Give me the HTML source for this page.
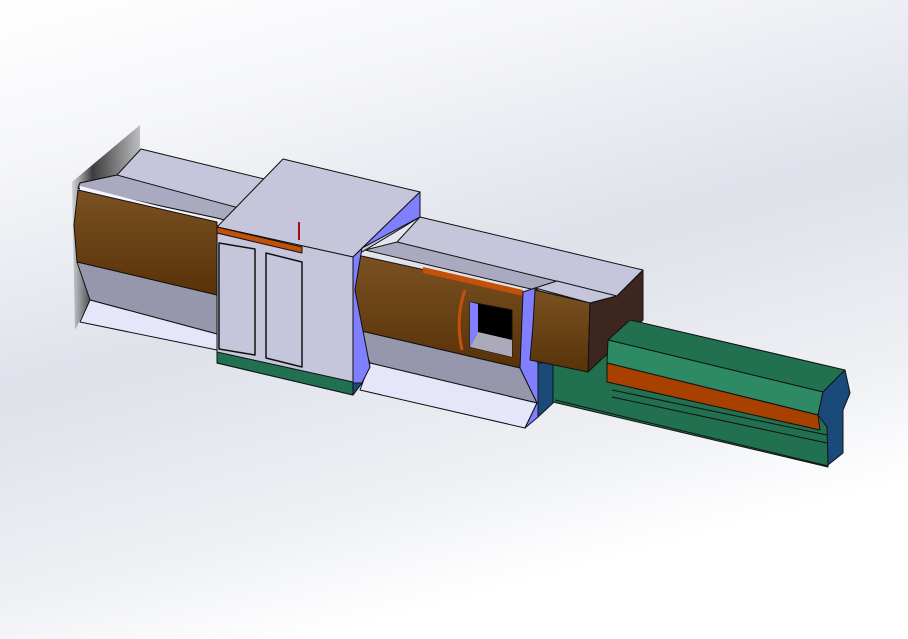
<!DOCTYPE html>
<html><head><meta charset="utf-8"><style>
html,body{margin:0;padding:0;}
body{width:908px;height:639px;overflow:hidden;background:linear-gradient(165deg,#ffffff 0%,#f4f5f8 20%,#dfe1ea 45%,#eef0f4 68%,#ffffff 82%);}
svg{position:absolute;left:0;top:0;}
</style></head><body>
<svg width="908" height="639" viewBox="0 0 908 639">
<defs>
<linearGradient id="br" x1="0" y1="0" x2="0" y2="1"><stop offset="0" stop-color="#7a5122"/><stop offset="1" stop-color="#583308"/></linearGradient>
<linearGradient id="sh" x1="0" y1="0" x2="1" y2="0"><stop offset="0" stop-color="#555" stop-opacity="0.2"/><stop offset="0.3" stop-color="#3c3c3c"/><stop offset="1" stop-color="#3c3c3c" stop-opacity="0.3"/></linearGradient>
</defs>
<g stroke="#111" stroke-width="1" stroke-linejoin="round">
<polygon points="72,182 140,125 140,175 90,300 75,330" fill="url(#sh)" stroke="none"/>
<polygon points="80,183 117,175 141,149 420,217 357,255 217,218 78,188" fill="#c5c5dc"/>
<polygon points="80,183 117,175 357,240 357,255 217,218 78,188" fill="#a9a9bf"/>
<polygon points="80,186 217,221 217,225 80,190" fill="#f4f4ff" stroke="none"/>
<polygon points="78,190 217,222 217,295 77,262 74,225" fill="url(#br)"/>
<polygon points="77,262 217,295 217,334 90,300" fill="#9696ad"/>
<polygon points="90,300 217,334 217,350 80,322" fill="#e6e6fa"/>
<polygon points="397,242 420,217 643,270 617,296 590,303 535,290" fill="#c5c5dc"/>
<polygon points="365,250 397,242 560,282 535,290" fill="#a9a9bf"/>
<polygon points="357,255 525,292 520,368 357,330 354,290" fill="url(#br)"/>
<polygon points="423,267 523,290 523,296 423,273" fill="#c5500a" stroke="none"/>
<polygon points="357,330 520,368 537,403 370,363" fill="#9696ad"/>
<polygon points="370,363 537,403 525,428 360,390" fill="#e6e6fa"/>
<polygon points="470,302 512,310 512,357 470,347" fill="#000"/>
<polygon points="478,332 512,340 512,357 470,347" fill="#aaaabb" stroke="none"/>
<polygon points="470,302 478,304 478,332 470,347" fill="#7f7fff" stroke="none"/>
<path d="M465,290 Q455,318 462,350" fill="none" stroke="#c5500a" stroke-width="3"/>
<polygon points="523,292 535,288 537,360 548,403 538,417 525,428 537,403 520,368" fill="#7f7fff"/>
<polygon points="538,363 553,363 553,403 538,417" fill="#1a4a7a"/>
<!-- green rail -->
<polygon points="553,360 610,355 822,410 828,427 828,467 553,402" fill="#217050"/>
<polygon points="535,288 557,281 617,296 590,303" fill="#c5c5dc"/>
<polygon points="535,290 590,303 588,372 530,360 533,325" fill="url(#br)"/>
<polygon points="590,303 617,296 643,270 643,320 588,372" fill="#3d2520"/>
<polygon points="630,320 845,370 823,392 608,340" fill="#217050"/>
<polygon points="608,340 823,392 818,415 607,363" fill="#2e8a64"/>
<polygon points="607,363 818,415 820,430 607,382" fill="#a84000"/>
<line x1="612" y1="390" x2="827" y2="435"/>
<line x1="612" y1="397" x2="827" y2="443"/>
<line x1="555" y1="400" x2="828" y2="466"/>
<polygon points="845,370 850,393 843,410 843,453 828,465 827,427 818,415 823,392" fill="#1a4a7a"/>
<!-- central box -->
<polygon points="217,227 283,159 420,192 353,257" fill="#c5c5dc"/>
<polygon points="420,192 420,217 362,248 355,290 370,367 362,383 353,395 353,257" fill="#7f7fff"/>
<polygon points="353,383 362,383 353,395" fill="#1a4a7a"/>
<polygon points="217,227 353,257 353,395 217,363" fill="#c5c5dc"/>
<polygon points="217,227 302,247 302,253 217,233" fill="#c5500a"/>
<polygon points="219,243 255,249 255,355 219,349" fill="#c5c5dc" stroke-width="1.5"/>
<polygon points="266,253 302,262 302,367 266,358" fill="#c5c5dc" stroke-width="1.5"/>
<polygon points="217,352 353,382 353,395 217,363" fill="#217050"/>
<line x1="299" y1="222" x2="299" y2="240" stroke="#a01010" stroke-width="2"/>
</g>
</svg>
</body></html>
